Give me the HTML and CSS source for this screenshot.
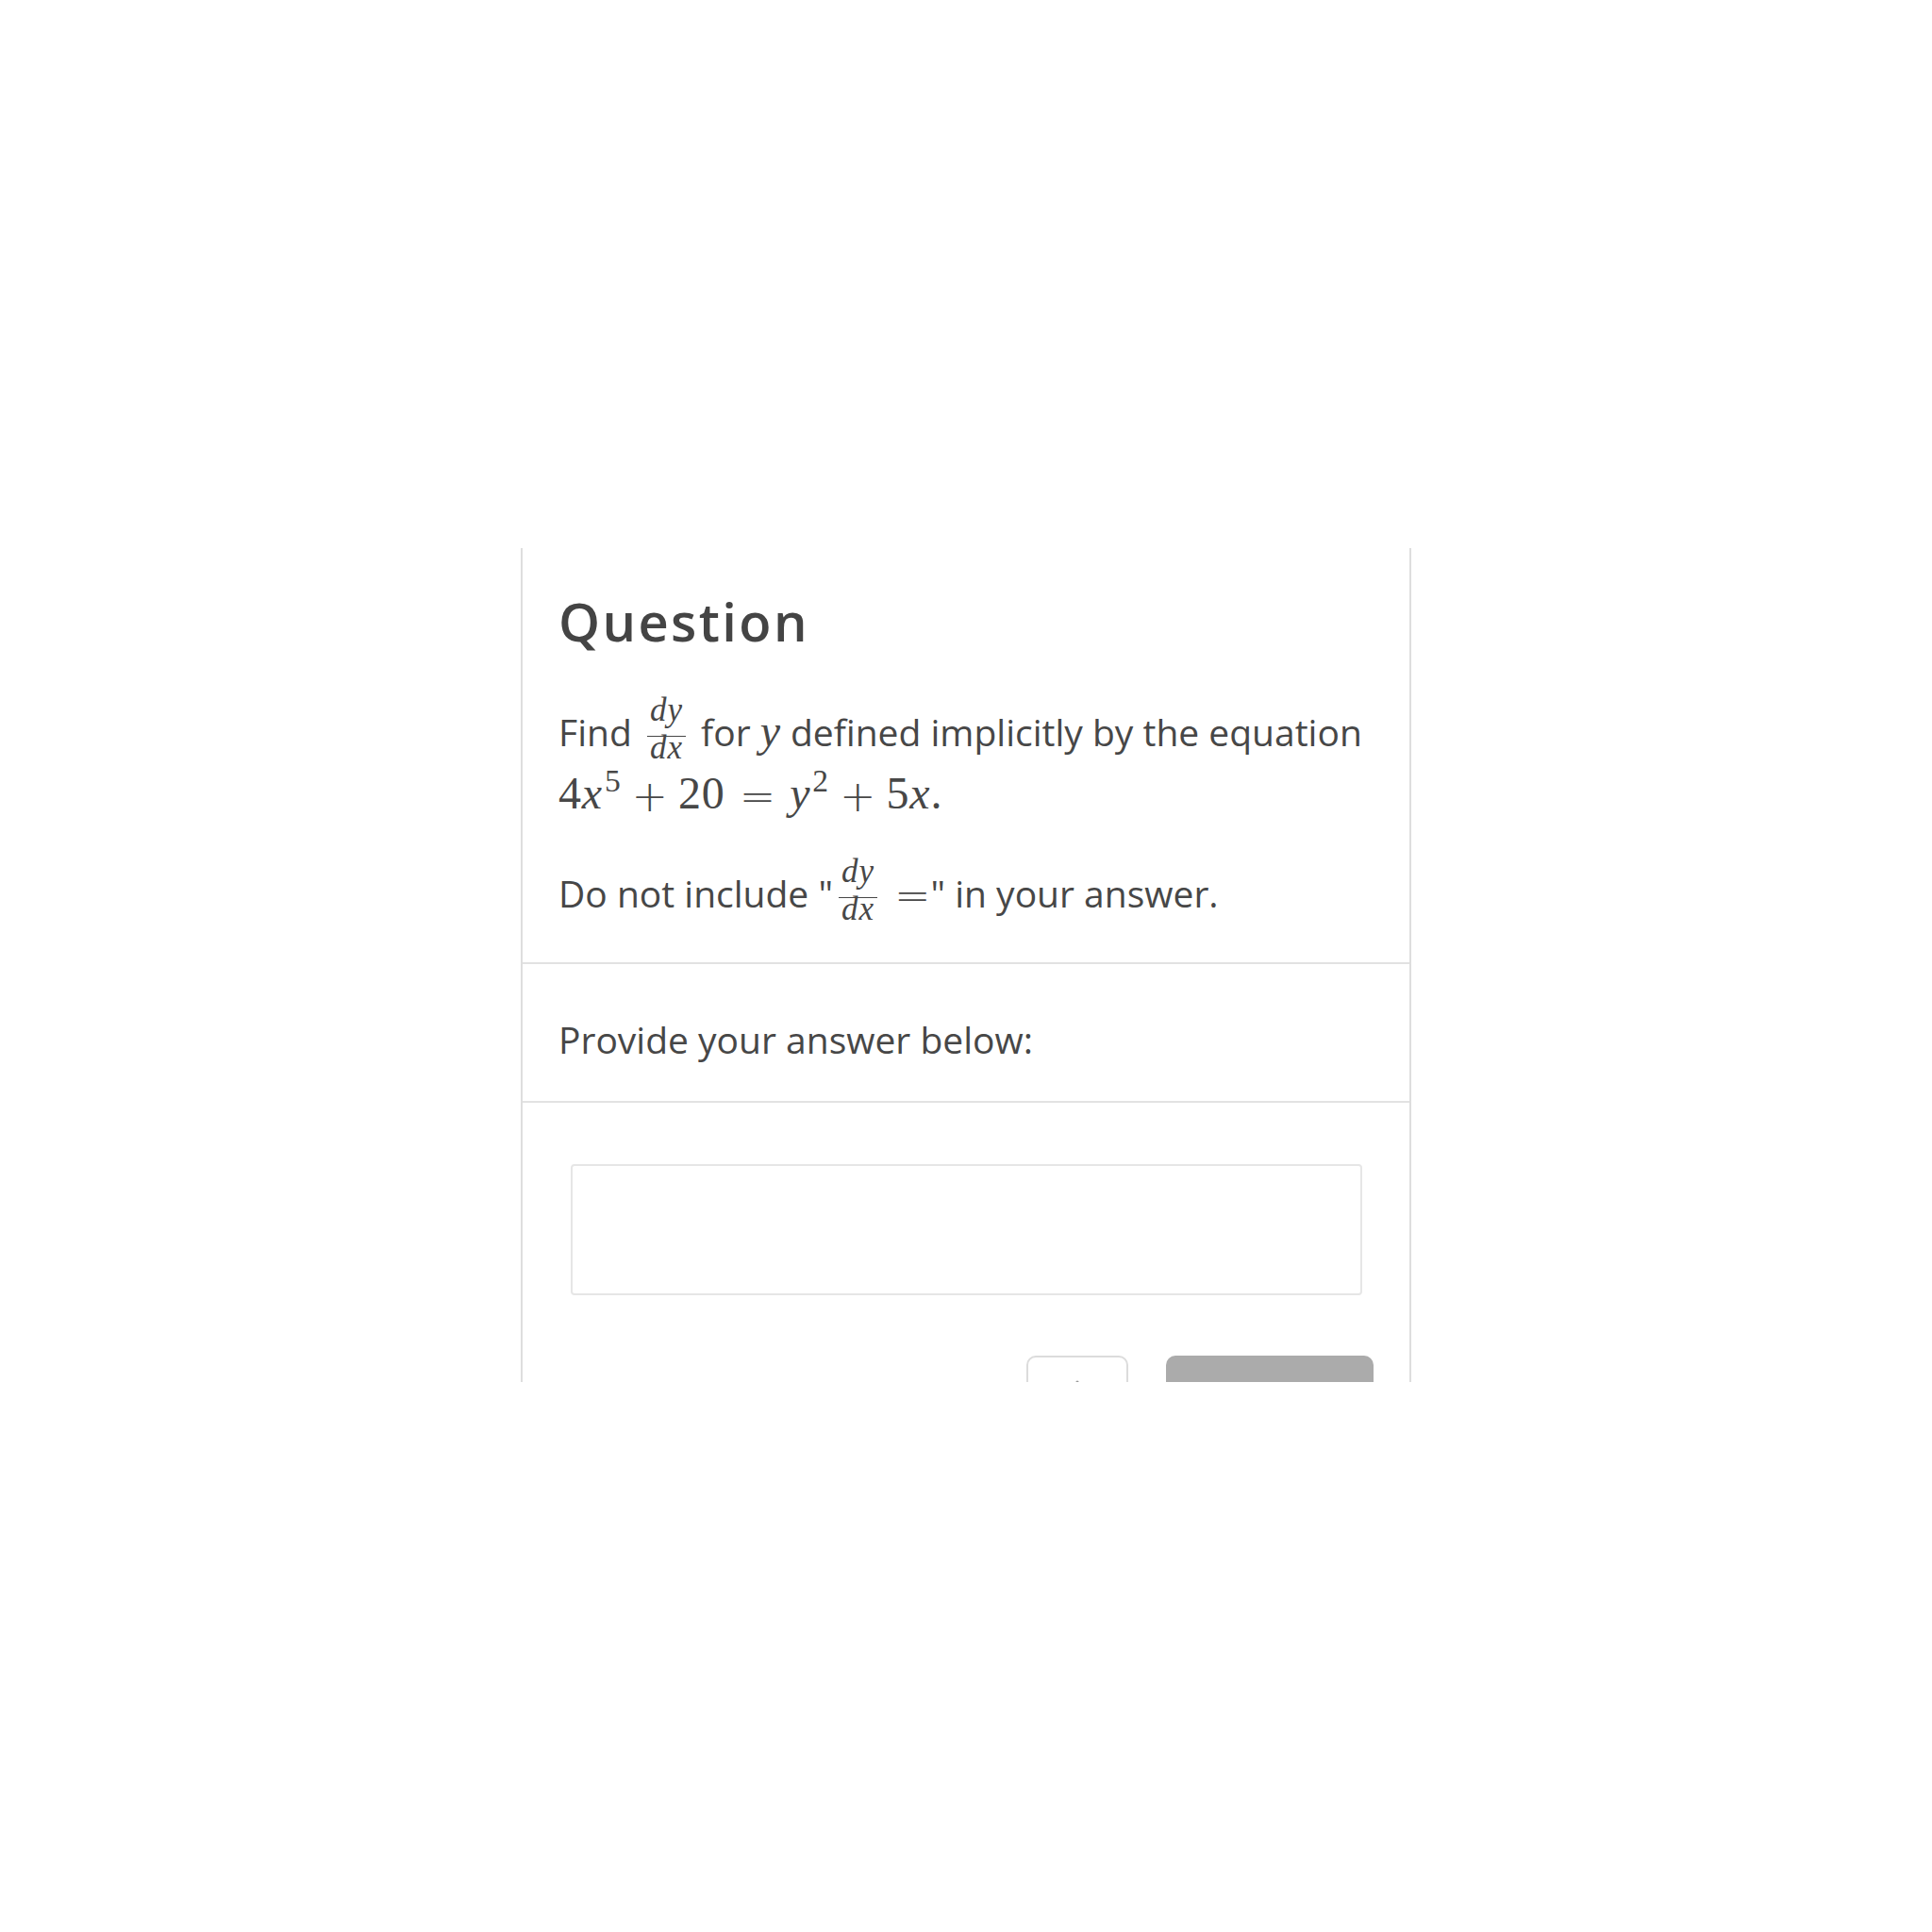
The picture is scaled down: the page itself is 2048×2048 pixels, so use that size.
FILE: index.html
```html
<!DOCTYPE html>
<html lang="en">
<head>
<meta charset="utf-8">
<title>Question</title>
<link rel="stylesheet" href="styles.css">
</head>
<body>
<div class="card">
  <section class="sec sec-q">
    <h1 class="title">Question</h1>
    <p class="text first">Find <span class="frac"><span class="num"><i>dy</i></span><span class="den"><i>dx</i></span></span> for <span class="m"><i>y</i></span> defined implicitly by the equation <span class="m eq">4<i>x</i><sup>5</sup><span class="bin"><span class="op">+</span></span>20<span class="rel"><span class="op">=</span></span><i>y</i><sup>2</sup><span class="bin"><span class="op">+</span></span>5<i>x</i>.</span></p>
    <p class="text second">Do not include "<span class="frac"><span class="num"><i>dy</i></span><span class="den"><i>dx</i></span></span><span class="m"><span class="rel-l"><span class="op">=</span></span></span>" in your answer.</p>
  </section>
  <section class="sec sec-p">
    <p class="text">Provide your answer below:</p>
  </section>
  <section class="sec sec-a">
    <div class="answer"></div>
    <div class="actions">
      <button class="btn btn-ghost" type="button" aria-label="More"><svg class="dot" width="4" height="4" viewBox="0 0 4 4"><circle cx="2" cy="2" r="1.6" fill="#9a9a9a"/></svg></button>
      <button class="btn btn-submit" type="button" aria-label="Submit"></button>
    </div>
  </section>
</div>
</body>
</html>
```
FILE: styles.css
```css
html, body {
  margin: 0;
  padding: 0;
  background: #ffffff;
}

body {
  font-family: "Open Sans", "Liberation Sans", sans-serif;
  color: #474747;
}

.card {
  box-sizing: border-box;
  width: 944px;
  height: 884px;
  margin: 581px 0 0 552px;
  border-left: 2px solid #dedede;
  border-right: 2px solid #dedede;
  overflow: hidden;
  background: #fff;
}

.sec {
  padding: 0 38px;
}

.sec-q {
  padding-top: 44px;
  padding-bottom: 36px;
  border-bottom: 2px solid #e2e2e2;
}

.title {
  margin: 0 0 44px 0;
  font-size: 56px;
  line-height: 66px;
  font-weight: 600;
  letter-spacing: 2.4px;
  color: #444444;
}

.text {
  margin: 0;
  font-size: 39px;
  line-height: 58px;
}

.second {
  margin-top: 35px;
}

.m {
  font-family: "Liberation Serif", "DejaVu Serif", serif;
  font-size: 48px;
  line-height: 1;
  white-space: nowrap;
  letter-spacing: 0.8px;
}

.m i, .frac i {
  font-style: italic;
}

.m sup {
  font-size: 0.7em;
  line-height: 0;
  vertical-align: 18px;
  margin-left: 2px;
}

.op {
  display: inline-block;
  font-family: "DejaVu Sans", "Liberation Sans", sans-serif;
  font-weight: 200;
  font-size: 46px;
  line-height: 0;
  letter-spacing: 0;
  vertical-align: -2.5px;
}

.bin {
  padding: 0 11px;
}

.rel {
  padding: 0 15px;
}

.rel-l {
  padding-left: 12px;
}

.frac {
  display: inline-flex;
  flex-direction: column;
  align-items: stretch;
  vertical-align: 27px;
  font-family: "Liberation Serif", "DejaVu Serif", serif;
  font-size: 35px;
  line-height: 1;
  letter-spacing: 1px;
  text-align: center;
  margin: 0 6px;
}

.num {
  padding: 0 3px 9.5px;
  border-bottom: 1.6px solid #474747;
}

.den {
  padding: 0 3px 6.5px;
  margin-top: -2px;
  line-height: 0.8;
}

.sec-p {
  padding-top: 51px;
  padding-bottom: 36px;
  border-bottom: 2px solid #e2e2e2;
}

.sec-a {
  padding: 65px 50px 0 51px;
}

.answer {
  box-sizing: border-box;
  height: 139px;
  border: 2px solid #e6e6e6;
  border-radius: 4px;
  background: #fff;
}

.actions {
  display: flex;
  justify-content: flex-end;
  gap: 40px;
  margin-top: 64px;
  margin-right: -12px;
}

.btn {
  box-sizing: border-box;
  height: 72px;
  border-radius: 10px;
  padding: 0;
}

.btn-ghost {
  display: flex;
  justify-content: center;
  align-items: flex-start;
  width: 108px;
  background: #fff;
  border: 2px solid #dcdcdc;
  padding-top: 24px;
}

.dot {
  display: block;
}

.btn-submit {
  width: 220px;
  background: #ababab;
  border: none;
}
```
